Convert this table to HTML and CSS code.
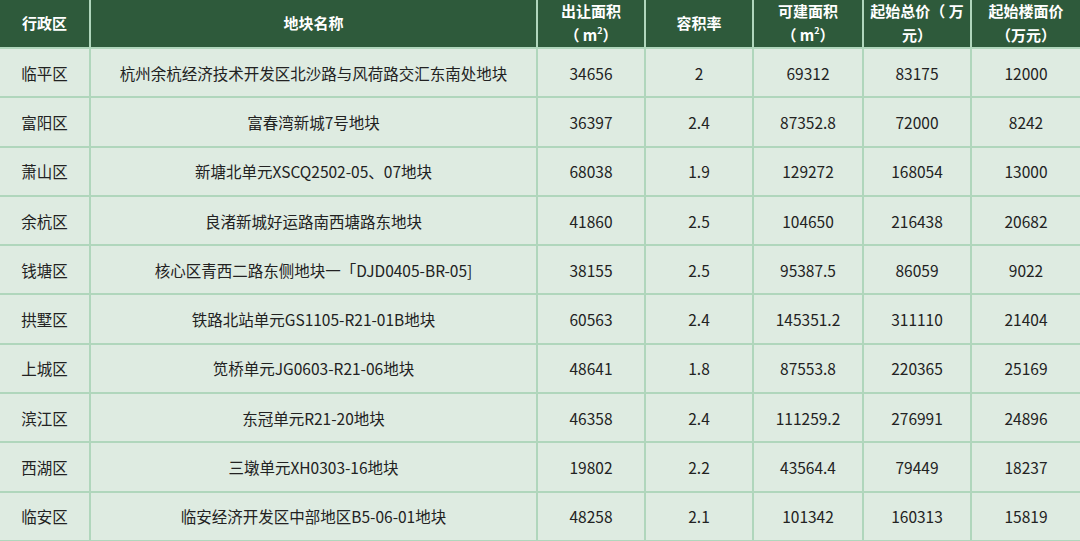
FILE: index.html
```html
<!DOCTYPE html>
<html lang="zh">
<head>
<meta charset="utf-8">
<link rel="stylesheet" href="styles.css">
</head>
<body>
<table class="land">
<colgroup>
<col class="c1"><col class="c2"><col class="c3"><col class="c4"><col class="c5"><col class="c6"><col class="c7">
</colgroup>
<thead>
<tr>
<th>行政区</th>
<th>地块名称</th>
<th>出让面积<br>（ m<sup>2</sup>）</th>
<th>容积率</th>
<th>可建面积<br>（ m<sup>2</sup>）</th>
<th>起始总价（ 万<br>元）</th>
<th>起始楼面价<br>（万元）</th>
</tr>
</thead>
<tbody>
<tr><td>临平区</td><td>杭州余杭经济技术开发区北沙路与风荷路交汇东南处地块</td><td>34656</td><td>2</td><td>69312</td><td>83175</td><td>12000</td></tr>
<tr><td>富阳区</td><td>富春湾新城7号地块</td><td>36397</td><td>2.4</td><td>87352.8</td><td>72000</td><td>8242</td></tr>
<tr><td>萧山区</td><td>新塘北单元XSCQ2502-05、07地块</td><td>68038</td><td>1.9</td><td>129272</td><td>168054</td><td>13000</td></tr>
<tr><td>余杭区</td><td>良渚新城好运路南西塘路东地块</td><td>41860</td><td>2.5</td><td>104650</td><td>216438</td><td>20682</td></tr>
<tr><td>钱塘区</td><td>核心区青西二路东侧地块一「DJD0405-BR-05]</td><td>38155</td><td>2.5</td><td>95387.5</td><td>86059</td><td>9022</td></tr>
<tr><td>拱墅区</td><td>铁路北站单元GS1105-R21-01B地块</td><td>60563</td><td>2.4</td><td>145351.2</td><td>311110</td><td>21404</td></tr>
<tr><td>上城区</td><td>笕桥单元JG0603-R21-06地块</td><td>48641</td><td>1.8</td><td>87553.8</td><td>220365</td><td>25169</td></tr>
<tr><td>滨江区</td><td>东冠单元R21-20地块</td><td>46358</td><td>2.4</td><td>111259.2</td><td>276991</td><td>24896</td></tr>
<tr><td>西湖区</td><td>三墩单元XH0303-16地块</td><td>19802</td><td>2.2</td><td>43564.4</td><td>79449</td><td>18237</td></tr>
<tr><td>临安区</td><td>临安经济开发区中部地区B5-06-01地块</td><td>48258</td><td>2.1</td><td>101342</td><td>160313</td><td>15819</td></tr>
</tbody>
</table>
</body>
</html>
```

FILE: styles.css
```css
html, body {
  margin: 0;
  padding: 0;
  background: #deebe1;
}
body {
  width: 1080px;
  height: 541px;
  overflow: hidden;
  font-family: "Noto Sans CJK SC", "Noto Sans", sans-serif;
}
.land {
  width: 1080px;
  table-layout: fixed;
  border-collapse: collapse;
  margin-top: -1px;
}
.c1 { width: 90px; }
.c2 { width: 447px; }
.c3 { width: 108px; }
.c4 { width: 108px; }
.c5 { width: 110px; }
.c6 { width: 108px; }
.c7 { width: 109px; }
.land th,
.land td {
  border: 2px solid #b0d6bc;
  text-align: center;
  vertical-align: middle;
  padding: 0;
}
.land th {
  background: #2e5a3b;
  color: #ffffff;
  font-weight: bold;
  font-size: 15px;
  line-height: 24px;
  height: 47px;
  border-top: none;
}
.land th sup {
  font-size: 9px;
  line-height: 0;
  vertical-align: 7px;
}
.land td {
  background: #deebe1;
  color: #222222;
  font-size: 15.5px;
  height: 47.3px;
}
.land tr > :first-child { border-left: none; }
.land tr > :last-child { border-right: none; }
```
